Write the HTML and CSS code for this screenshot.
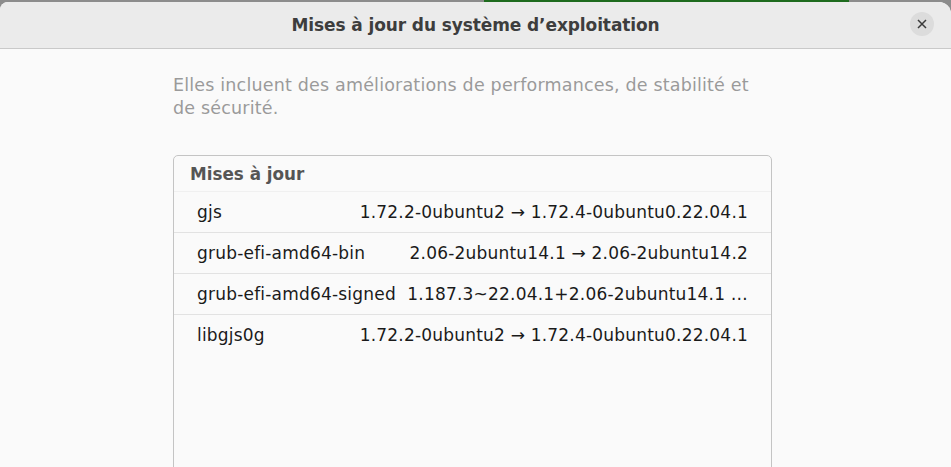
FILE: index.html
```html
<!DOCTYPE html>
<html lang="fr">
<head>
<meta charset="utf-8">
<link rel="stylesheet" href="styles.css">
</head>
<body>
<div class="backdrop">
  <div class="green-strip"></div>
</div>
<div class="dialog">
  <header class="titlebar">
    <h1 class="title">Mises à jour du système d’exploitation</h1>
    <button class="close" aria-label="Fermer">
      <svg width="10" height="10" viewBox="0 0 10 10"><path d="M1 1L9 9M9 1L1 9" stroke="#3a3a3a" stroke-width="1.5" fill="none"/></svg>
    </button>
  </header>
  <main class="content">
    <p class="desc">Elles incluent des améliorations de performances, de stabilité et de sécurité.</p>
    <section class="box">
      <div class="box-head">Mises à jour</div>
      <div class="row"><span class="name">gjs</span><span class="ver">1.72.2-0ubuntu2 → 1.72.4-0ubuntu0.22.04.1</span></div>
      <div class="row"><span class="name">grub-efi-amd64-bin</span><span class="ver">2.06-2ubuntu14.1 → 2.06-2ubuntu14.2</span></div>
      <div class="row"><span class="name">grub-efi-amd64-signed</span><span class="ver">1.187.3~22.04.1+2.06-2ubuntu14.1 …</span></div>
      <div class="row"><span class="name">libgjs0g</span><span class="ver">1.72.2-0ubuntu2 → 1.72.4-0ubuntu0.22.04.1</span></div>
    </section>
  </main>
</div>
</body>
</html>
```

FILE: styles.css
```css
html, body {
  margin: 0;
  padding: 0;
  height: 100%;
  overflow: hidden;
  background: #8c8c8c;
  font-family: "DejaVu Sans", "Noto Sans", sans-serif;
}
.backdrop {
  height: 2px;
  position: relative;
}
.green-strip {
  position: absolute;
  left: 484px;
  width: 365px;
  top: 0;
  height: 2px;
  background: #1e6b1e;
}
.dialog {
  height: calc(100% - 2px);
  background: #fafafa;
  border-radius: 8px 12px 0 0;
  overflow: hidden;
  display: flex;
  flex-direction: column;
}
.titlebar {
  height: 46px;
  flex: none;
  background: #ebebeb;
  border-bottom: 1px solid #c9c9c9;
  display: flex;
  align-items: center;
  justify-content: center;
  position: relative;
}
.title {
  margin: 0;
  font-size: 17px;
  font-weight: 700;
  color: #3d3d3d;
  letter-spacing: -0.1px;
}
.close {
  position: absolute;
  right: 17px;
  top: 10px;
  width: 24px;
  height: 24px;
  border-radius: 50%;
  border: none;
  padding: 0;
  background: #dcdcdc;
  display: flex;
  align-items: center;
  justify-content: center;
}
.content {
  padding: 25px 0 0 173px;
  width: 599px;
}
.desc {
  margin: 0 0 35px;
  max-width: 590px;
  font-size: 17.5px;
  letter-spacing: 0.18px;
  line-height: 23px;
  color: #9a9a9a;
}
.box {
  border: 1px solid #c4c4c4;
  border-radius: 5px;
  height: 400px;
  background: #fafafa;
}
.box-head {
  height: 35px;
  padding-left: 16px;
  display: flex;
  align-items: center;
  font-size: 16.8px;
  font-weight: 700;
  color: #555;
  border-bottom: 1px solid #f0f0f0;
}
.row {
  height: 40px;
  display: flex;
  align-items: center;
  justify-content: space-between;
  padding: 0 23px 0 23px;
  font-size: 17px;
  letter-spacing: 0.2px;
  color: #1a1a1a;
  border-bottom: 1px solid #e2e2e2;
}
.row:last-child {
  border-bottom: none;
}
```
